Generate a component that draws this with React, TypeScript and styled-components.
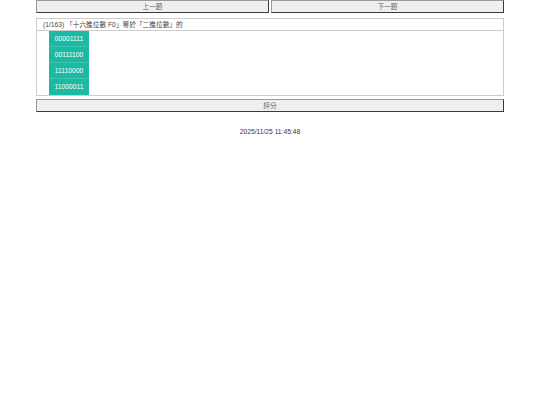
import styled, { createGlobalStyle } from 'styled-components';

const GlobalStyle = createGlobalStyle`
  html, body {
    margin: 0;
    padding: 0;
    background: #fff;
    font-family: 'Liberation Sans', 'Noto Sans CJK TC', sans-serif;
  }
`;

const Page = styled.div`
  width: 468px;
  margin: 0 auto;
  display: flex;
  flex-direction: column;
`;

const NavRow = styled.div`
  display: flex;
  gap: 2px;
`;

const PlainButton = styled.button`
  flex: 1;
  height: 13px;
  padding: 0;
  background: #efefef;
  border: 1px solid;
  border-color: #9a9a9a #3a3a3a #3a3a3a #9a9a9a;
  color: #666;
  font-family: inherit;
  font-size: 6.7px;
  line-height: 11px;
  cursor: pointer;
`;

const Panel = styled.div`
  margin-top: 5px;
  border: 1px solid #ccc;
`;

const Question = styled.div`
  height: 11px;
  padding-left: 6px;
  border-bottom: 1px solid #ccc;
  color: #444;
  font-size: 6.7px;
  line-height: 11px;
`;

const OptionList = styled.ul`
  list-style: none;
  margin: 0;
  padding: 0 0 0 12px;
  display: flex;
  flex-direction: column;
`;

const Option = styled.li`
  width: 40px;
  height: 16px;
  box-sizing: border-box;
  background: #1cbaa2;
  border-bottom: 1px solid #3cc5b0;
  color: #fff;
  font-size: 6.7px;
  line-height: 16px;
  text-align: center;
  &:last-child {
    border-bottom: none;
  }
`;

const ScoreButton = styled(PlainButton)`
  flex: none;
  margin-top: 3px;
  width: 100%;
`;

const Stamp = styled.div`
  margin-top: 16px;
  text-align: center;
  color: #333;
  font-size: 6.7px;
`;

const options = ['00001111', '00111100', '11110000', '11000011'];

export default function App() {
  return (
    <>
      <GlobalStyle />
      <Page>
        <NavRow>
          <PlainButton>上一題</PlainButton>
          <PlainButton>下一題</PlainButton>
        </NavRow>
        <Panel>
          <Question>(1/163) 「十六進位數 F0」等於「二進位數」的</Question>
          <OptionList>
            {options.map((o) => (
              <Option key={o}>{o}</Option>
            ))}
          </OptionList>
        </Panel>
        <ScoreButton>評分</ScoreButton>
        <Stamp>2025/11/25 11:45:48</Stamp>
      </Page>
    </>
  );
}
